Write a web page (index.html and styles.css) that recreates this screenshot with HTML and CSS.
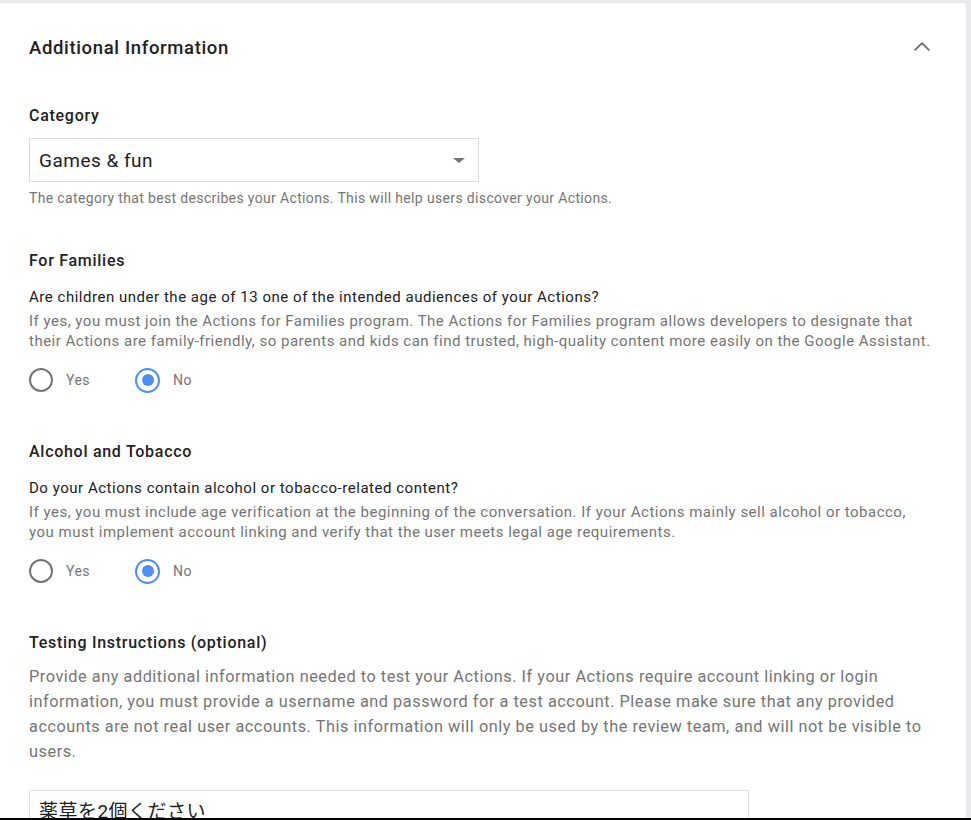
FILE: index.html
```html
<!DOCTYPE html>
<html lang="en">
<head>
<meta charset="utf-8">
<title>Additional Information</title>
<link rel="stylesheet" href="styles.css">
</head>
<body>
<div class="card">
  <div class="card-header">
    <h2 class="card-title">Additional Information</h2>
    <svg class="chevron" width="20" height="12" viewBox="0 0 20 12"><path d="M2.5 9.5 10 2.2l7.5 7.3" fill="none" stroke="#5f6368" stroke-width="1.7"/></svg>
  </div>

  <section class="section first">
    <h3 class="label">Category</h3>
    <div class="select">
      <span class="select-value">Games &amp; fun</span>
      <span class="select-arrow"></span>
    </div>
    <p class="helper">The category that best describes your Actions. This will help users discover your Actions.</p>
  </section>

  <section class="section families">
    <h3 class="label">For Families</h3>
    <p class="question">Are children under the age of 13 one of the intended audiences of your Actions?</p>
    <p class="desc">If yes, you must join the Actions for Families program. The Actions for Families program allows developers to designate that their Actions are family-friendly, so parents and kids can find trusted, high-quality content more easily on the Google Assistant.</p>
    <div class="radios">
      <label class="radio"><span class="ring"></span><span class="radio-text">Yes</span></label>
      <label class="radio checked"><span class="ring"><span class="dot"></span></span><span class="radio-text">No</span></label>
    </div>
  </section>

  <section class="section">
    <h3 class="label">Alcohol and Tobacco</h3>
    <p class="question">Do your Actions contain alcohol or tobacco-related content?</p>
    <p class="desc">If yes, you must include age verification at the beginning of the conversation. If your Actions mainly sell alcohol or tobacco, you must implement account linking and verify that the user meets legal age requirements.</p>
    <div class="radios">
      <label class="radio"><span class="ring"></span><span class="radio-text">Yes</span></label>
      <label class="radio checked"><span class="ring"><span class="dot"></span></span><span class="radio-text">No</span></label>
    </div>
  </section>

  <section class="section">
    <h3 class="label">Testing Instructions (optional)</h3>
    <p class="long">Provide any additional information needed to test your Actions. If your Actions require account linking or login information, you must provide a username and password for a test account. Please make sure that any provided accounts are not real user accounts. This information will only be used by the review team, and will not be visible to users.</p>
    <div class="textarea">薬草を2個ください</div>
  </section>
</div>
<div class="bottom-edge"></div>
</body>
</html>
```
FILE: styles.css
```css
html, body {
  margin: 0;
  padding: 0;
  height: 100%;
  overflow: hidden;
}
body {
  background: #e8eaed;
  font-family: Roboto, "Noto Sans", Arial, sans-serif;
  color: #202124;
  letter-spacing: 0.03em;
}
.card {
  margin-top: 3px;
  width: 966px;
  box-sizing: border-box;
  background: #fff;
  border-top-right-radius: 4px;
  padding: 33px 30px 40px 29px;
  min-height: 900px;
}
.card-header {
  display: flex;
  align-items: center;
  justify-content: space-between;
  height: 24px;
}
.card-title {
  margin: 0;
  font-size: 18.5px;
  line-height: 24px;
  font-weight: 500;
  letter-spacing: 0.035em;
  color: #202124;
}
.chevron {
  margin-right: 4px;
  margin-top: -2px;
}
.section {
  margin-top: 50px;
}
.section.first {
  margin-top: 46px;
}
.section.families {
  margin-top: 43px;
}
.label {
  margin: 0;
  font-size: 16px;
  line-height: 20px;
  font-weight: 500;
  letter-spacing: 0.045em;
  color: #202124;
}
.select {
  margin-top: 12px;
  width: 450px;
  height: 44px;
  box-sizing: border-box;
  border: 1px solid #dadce0;
  display: flex;
  align-items: center;
  justify-content: space-between;
  padding: 0 13px 0 9px;
}
.select-value {
  font-size: 19px;
  color: #202124;
}
.select-arrow {
  width: 0;
  height: 0;
  border-left: 6px solid transparent;
  border-right: 6px solid transparent;
  border-top: 5px solid #757575;
}
.helper {
  margin: 6px 0 0;
  font-size: 14px;
  line-height: 20px;
  letter-spacing: 0.025em;
  color: #757575;
}
.question {
  margin: 16px 0 0;
  font-size: 15px;
  line-height: 20px;
  letter-spacing: 0.035em;
  color: #202124;
}
.desc {
  margin: 4px 0 0;
  max-width: 904px;
  font-size: 15px;
  line-height: 20px;
  letter-spacing: 0.033em;
  color: #757575;
}
.radios {
  margin-top: 17px;
  display: flex;
  height: 24px;
}
.radio {
  display: flex;
  align-items: center;
  width: 106px;
}
.ring {
  width: 24px;
  height: 24px;
  box-sizing: border-box;
  border: 2px solid #757575;
  border-radius: 50%;
  display: flex;
  align-items: center;
  justify-content: center;
}
.radio.checked .ring {
  border-color: #4e8ff5;
  width: 25px;
  height: 25px;
}
.dot {
  width: 12px;
  height: 12px;
  border-radius: 50%;
  background: #4e8ff5;
}
.radio-text {
  margin-left: 13px;
  font-size: 14px;
  color: #757575;
}
.long {
  margin: 11px 0 0;
  font-size: 16.3px;
  line-height: 25px;
  letter-spacing: 0.033em;
  color: #757575;
}
.textarea {
  margin-top: 26px;
  width: 720px;
  height: 80px;
  box-sizing: border-box;
  border: 1px solid #e0e0e0;
  padding: 8px 9px;
  font-family: Roboto, "Noto Sans CJK JP", sans-serif;
  font-size: 19px;
  line-height: 26px;
  color: #202124;
}
.bottom-edge {
  position: fixed;
  left: 0;
  right: 0;
  bottom: 0;
  height: 2px;
  background: #000;
}
```
